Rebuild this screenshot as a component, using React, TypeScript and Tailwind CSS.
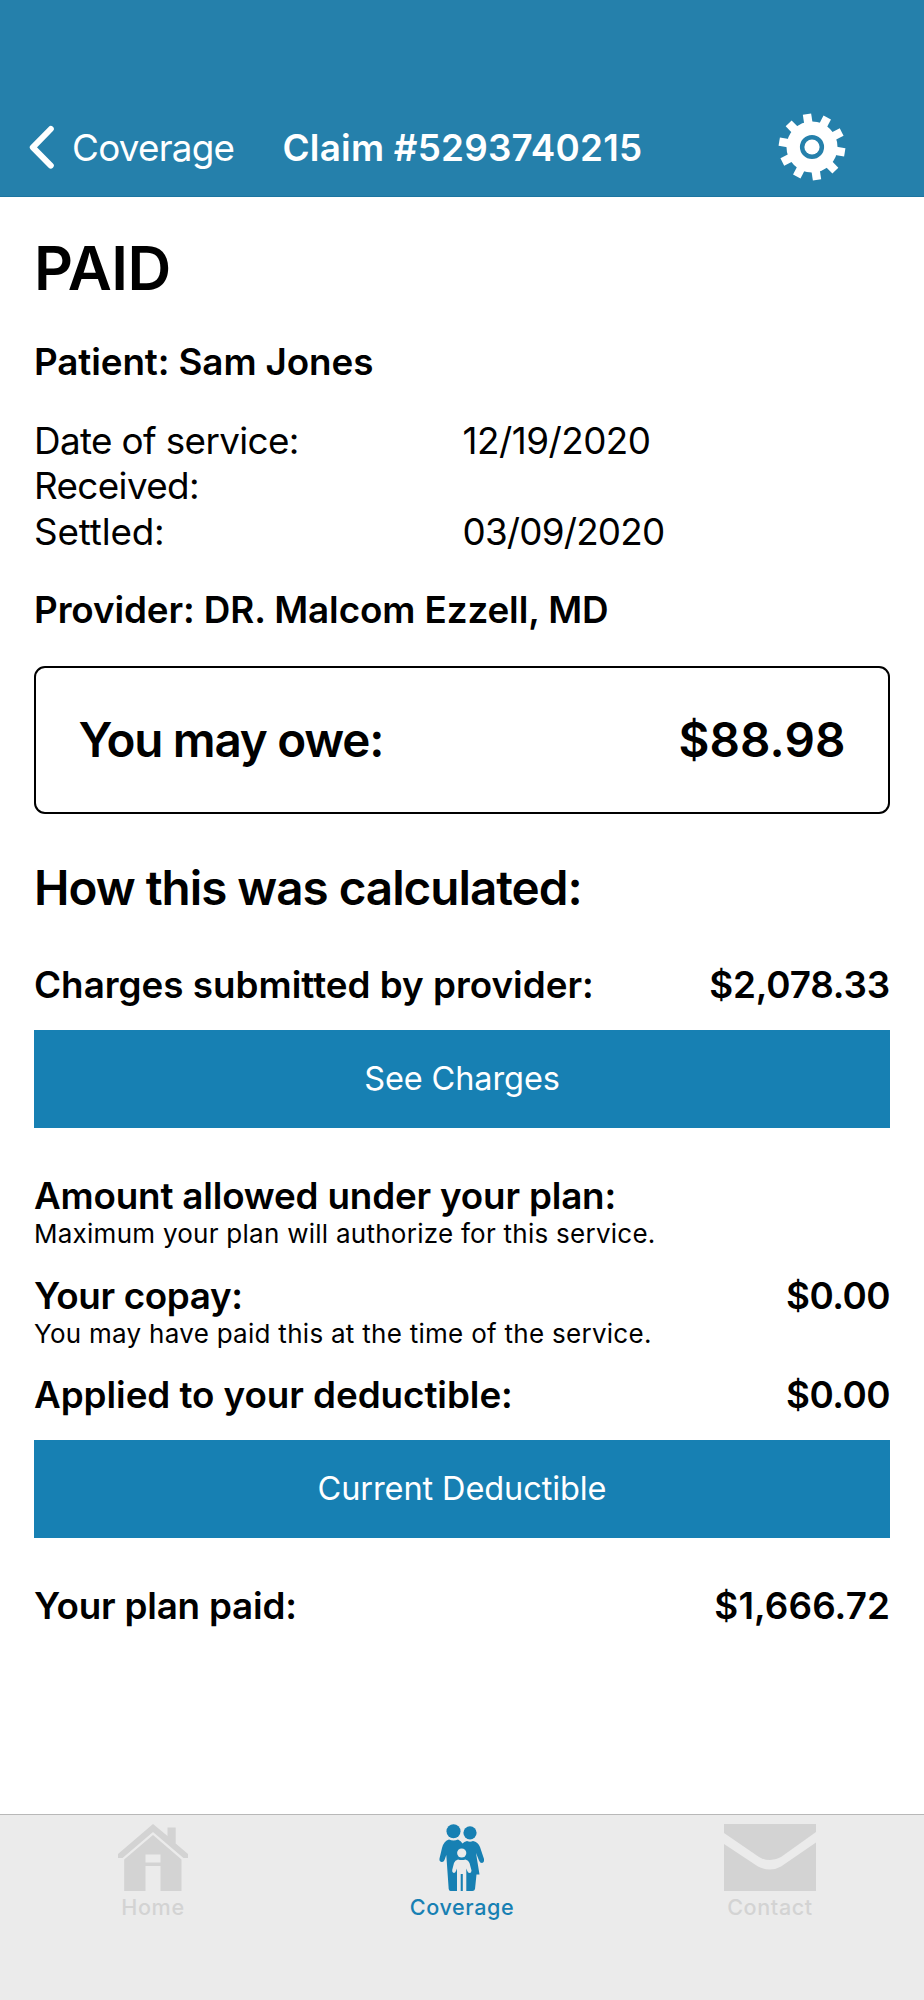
const GEAR_TEETH = [-8.7, 27.3, 63.3, 99.3, 135.3, 171.3, 207.3, 243.3, 279.3, 315.3];

const GearIcon = () => {
    return (
        <svg width="68" height="68" viewBox="-34 -34 68 68" fill="#fff">
            {GEAR_TEETH.map((angle) => (
                <rect
                    key={angle}
                    x="-4.2"
                    y="-33.2"
                    width="8.4"
                    height="12"
                    transform={`rotate(${angle})`}
                />
            ))}
            <circle r="18.8" fill="none" stroke="#fff" strokeWidth="13.4" />
            <circle r="7.6" />
        </svg>
    );
};

const HomeIcon = () => {
    return (
        <svg width="70" height="68" viewBox="0 0 70 68" fill="currentColor">
            <path d="M35 0 49.5 12V3.5H57.7V19.5L70 30V34H65.5L35 8 4.5 34H0V30Z" />
            <path
                fillRule="evenodd"
                d="M35 11 63.5 35.5V67H42.5V42H27.5V67H6.2V35.5ZM27.5 30.5V38.5H42.5V30.5Z"
            />
        </svg>
    );
};

const FamilyIcon = () => {
    return (
        <svg width="46" height="68" viewBox="0 0 46 68" fill="currentColor">
            <circle cx="14.5" cy="7.2" r="7" />
            <circle cx="31" cy="8.8" r="6.6" />
            <path d="M10 15.5Q14.5 17.5 19 15.5Q22 17 23.5 19.5Q25 17.5 28 17Q31 18.5 34 17Q39 18 41 23L45 35Q45.5 38.5 43 39Q41 39 40 36.5L37 29 40.5 50.5H37.5L36 65Q35.5 67 33.5 67H11.5Q10 67 9.7 65L7.3 31 5.5 36Q4.5 38.5 2.5 38Q0 37.5.5 34.5L3 24Q5 16.5 10 15.5Z" />
            <g fill="#ebebeb">
                <circle cx="22.7" cy="29" r="4.6" />
                <path d="M19 35.5Q22.7 36.5 26.5 35.5Q29.5 36 30.5 39L32.5 46.5Q32.5 49 30.5 49Q29 49 28.3 47L27.3 44.5V67H23.8V50H21.7V67H18V44.5L17 47Q16.3 49 14.8 49Q12.8 48.5 13.2 46L15 39Q16 36 19 35.5Z" />
            </g>
        </svg>
    );
};

const MailIcon = () => {
    return (
        <svg width="92" height="68" viewBox="0 0 92 68" fill="currentColor">
            <path d="M0 0H92V8L57 33Q52 36 46 36Q40 36 35 33L0 9Z" />
            <path d="M0 20 34 42.5Q40 45.5 46 45.5Q52 45.5 57 42.5L92 18.5V67H0Z" />
        </svg>
    );
};

const Button = ({ label }: { label: string }) => {
    return (
        <button className="mt-[21.5px] flex h-[98px] w-full items-center justify-center bg-[#1780b3] pt-px text-[32.5px] font-normal tracking-[-0.1px] text-white">
            {label}
        </button>
    );
};

const App = () => {
    return (
        <div className="flex h-[2000px] w-[924px] flex-col bg-white font-['Inter',sans-serif] text-[36.8px] leading-[46px] text-black">
            <header className="flex h-[197px] items-center border-b border-[#1c75a0] bg-[#2580ab] pt-[98px] text-white">
                <svg
                    className="ml-[28px]"
                    width="28"
                    height="44"
                    viewBox="0 0 28 44"
                    fill="none"
                    stroke="#fff"
                    strokeWidth="6"
                    strokeLinecap="round"
                    strokeLinejoin="round"
                >
                    <path d="M22.8 4 4.8 22.3 22.8 40.6" />
                </svg>
                <span className="ml-[16px] w-[210.5px] pt-[2px] tracking-[-0.75px]">
                    Coverage
                </span>
                <h1 className="w-[495.5px] pt-[2px] font-semibold tracking-[0.22px]">
                    Claim #5293740215
                </h1>
                <GearIcon />
            </header>

            <main className="flex-1 px-[34px] pt-[33.5px] font-semibold">
                <h2 className="text-[60.6px] leading-[74px] tracking-[-0.5px]">
                    PAID
                </h2>
                <p className="mt-[34px] tracking-[-0.1px]">
                    Patient: Sam Jones
                </p>

                <div className="mt-[33.5px] grid grid-cols-[428.5px_1fr] leading-[45.3px] font-normal tracking-[-0.62px]">
                    <span>Date of service:</span>
                    <span className="tracking-[-0.5px]">12/19/2020</span>
                    <span className="col-span-2">Received:</span>
                    <span className="tracking-[-0.15px]">Settled:</span>
                    <span className="tracking-[-0.8px]">03/09/2020</span>
                </div>

                <p className="mt-[33.5px] tracking-[-0.1px]">
                    Provider: DR. Malcom Ezzell, MD
                </p>

                <div className="mt-[32.6px] flex h-[148px] items-center justify-between rounded-[11px] border-2 border-black px-[42.5px] pt-px text-[47.6px]">
                    <span className="tracking-[-1.25px]">You may owe:</span>
                    <span className="tracking-[0.1px]">$88.98</span>
                </div>

                <h3 className="mt-[45.5px] text-[47.6px] leading-[58px] tracking-[-1px]">
                    How this was calculated:
                </h3>

                <div className="mt-[45px] flex justify-between">
                    <span>Charges submitted by provider:</span>
                    <span className="tracking-[-0.15px]">$2,078.33</span>
                </div>
                <Button label="See Charges" />

                <div className="mt-[45px] tracking-[-0.18px]">
                    Amount allowed under your plan:
                </div>
                <p className="text-[26px] leading-[30px] font-normal tracking-[0.26px]">
                    Maximum your plan will authorize for this service.
                </p>

                <div className="mt-[24px] flex justify-between">
                    <span className="tracking-[-0.35px]">Your copay:</span>
                    <span className="tracking-[-0.5px]">$0.00</span>
                </div>
                <p className="text-[26px] leading-[30px] font-normal tracking-[0.28px]">
                    You may have paid this at the time of the service.
                </p>

                <div className="mt-[23.5px] flex justify-between">
                    <span className="tracking-[-0.06px]">
                        Applied to your deductible:
                    </span>
                    <span className="tracking-[-0.5px]">$0.00</span>
                </div>
                <Button label="Current Deductible" />

                <div className="mt-[45px] flex justify-between">
                    <span className="tracking-[-0.2px]">Your plan paid:</span>
                    <span className="tracking-[0.1px]">$1,666.72</span>
                </div>
            </main>

            <nav className="grid h-[186px] grid-cols-3 border-t border-[#b8b8b8] bg-[#ebebeb] pt-[9px] text-[21.6px] leading-[30px] font-medium tracking-[0.6px] text-[#d3d3d3]">
                <div className="flex flex-col items-center pr-[2px]">
                    <HomeIcon />
                    <span>Home</span>
                </div>
                <div className="flex flex-col items-center text-[#1780b3]">
                    <FamilyIcon />
                    <span>Coverage</span>
                </div>
                <div className="flex flex-col items-center">
                    <MailIcon />
                    <span>Contact</span>
                </div>
            </nav>
        </div>
    );
};

export default App;
